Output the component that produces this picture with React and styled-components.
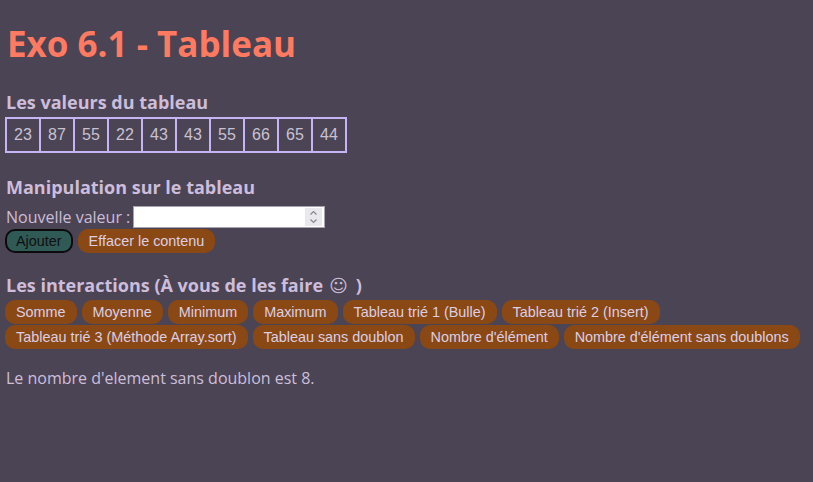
import React from "react";
import styled, { createGlobalStyle } from "styled-components";

const GlobalStyle = createGlobalStyle`
  html, body { margin: 0; padding: 0; background: #4b4454; }
  body { font-family: "Open Sans", "DejaVu Sans", sans-serif; }
`;

const Page = styled.div`
  padding: 0 5px;
  min-height: 482px;
  box-sizing: border-box;
  overflow: hidden;
  color: #cbbdd8;
`;

const Title = styled.h1`
  margin: 0;
  padding-top: 22px;
  font-family: "Open Sans", sans-serif;
  font-weight: 700;
  font-size: 35px;
  line-height: 44px;
  color: #ff7a60;
  padding-left: 2px;
`;

const SectionTitle = styled.h3`
  margin: ${(p) => p.$top}px 0 0 0;
  font-family: "Open Sans", sans-serif;
  font-weight: 700;
  font-size: 18px;
  line-height: 22px;
  color: #cdbdda;
  padding-left: 1px;
`;

const Smiley = styled.span`
  font-family: "DejaVu Sans", sans-serif;
  font-weight: 400;
  margin: 0 8px 0 6px;
`;

const ValueTable = styled.table`
  border-collapse: collapse;
  margin-top: 4px;
`;

const Cell = styled.td`
  border: 2px solid #c6b4f4;
  width: 32px;
  height: 32px;
  padding: 0;
  text-align: center;
  font-family: "Liberation Sans", Arial, sans-serif;
  font-size: 16px;
  color: #c9c1d1;
`;

const FieldRow = styled.div`
  display: flex;
  align-items: center;
  gap: 3px;
  margin-top: 8px;
  height: 22px;
`;

const Label = styled.label`
  font-family: "Open Sans", sans-serif;
  font-size: 16px;
  color: #cbbdd8;
  padding-left: 1px;
`;

const NumberBox = styled.div`
  display: flex;
  align-items: stretch;
  width: 192px;
  height: 22px;
  box-sizing: border-box;
  background: #fff;
  border: 1px solid #a8a3ae;
`;

const NumberInput = styled.input`
  flex: 1;
  min-width: 0;
  border: none;
  outline: none;
  background: transparent;
  padding: 0 4px;
  font-size: 13px;
`;

const Spinner = styled.div`
  width: 17px;
  margin: 1px 2px 1px 0;
  background: #e9e8ec;
  display: flex;
  align-items: center;
  justify-content: center;
`;

const ButtonRow = styled.div`
  display: flex;
  flex-wrap: wrap;
  gap: 1px 5px;
  margin-top: ${(p) => p.$top}px;
`;

const Button = styled.button`
  height: 24px;
  padding: 0 9px;
  border-radius: 10px;
  border: 2px solid ${(p) => (p.$primary ? "#0b0b0d" : "#8a4815")};
  background: ${(p) => (p.$primary ? "#2f5a56" : "#8a4815")};
  color: ${(p) => (p.$primary ? "#101010" : "#dccfe3")};
  font-family: "Liberation Sans", Arial, sans-serif;
  font-size: 14.4px;
  line-height: 1;
  cursor: pointer;
  white-space: nowrap;
`;

const Result = styled.p`
  margin: 19px 0 0 0;
  font-family: "Open Sans", sans-serif;
  font-size: 16px;
  line-height: 20px;
  color: #cdbfda;
  padding-left: 1px;
`;

const values = [23, 87, 55, 22, 43, 43, 55, 66, 65, 44];

const interactions = [
  "Somme",
  "Moyenne",
  "Minimum",
  "Maximum",
  "Tableau trié 1 (Bulle)",
  "Tableau trié 2 (Insert)",
  "Tableau trié 3 (Méthode Array.sort)",
  "Tableau sans doublon",
  "Nombre d'élément",
  "Nombre d'élément sans doublons",
];

export default function App() {
  return (
    <>
      <GlobalStyle />
      <Page>
        <Title>Exo 6.1 - Tableau</Title>
        <SectionTitle $top={25}>Les valeurs du tableau</SectionTitle>
        <ValueTable>
          <tbody>
            <tr>
              {values.map((v, i) => (
                <Cell key={i}>{v}</Cell>
              ))}
            </tr>
          </tbody>
        </ValueTable>
        <SectionTitle $top={23}>Manipulation sur le tableau</SectionTitle>
        <FieldRow>
          <Label htmlFor="val">Nouvelle valeur :</Label>
          <NumberBox>
            <NumberInput id="val" type="text" />
            <Spinner>
              <svg width="9" height="14" viewBox="0 0 9 14">
                <path d="M1.5 4.5 L4.5 1.5 L7.5 4.5 M1.5 9.5 L4.5 12.5 L7.5 9.5" fill="none" stroke="#888" strokeWidth="1.2" />
              </svg>
            </Spinner>
          </NumberBox>
        </FieldRow>
        <ButtonRow $top={1}>
          <Button $primary>Ajouter</Button>
          <Button>Effacer le contenu</Button>
        </ButtonRow>
        <SectionTitle $top={21}>
          Les interactions (À vous de les faire<Smiley>☺</Smiley>)
        </SectionTitle>
        <ButtonRow $top={3}>
          {interactions.map((t) => (
            <Button key={t}>{t}</Button>
          ))}
        </ButtonRow>
        <Result>Le nombre d'element sans doublon est 8.</Result>
      </Page>
    </>
  );
}
